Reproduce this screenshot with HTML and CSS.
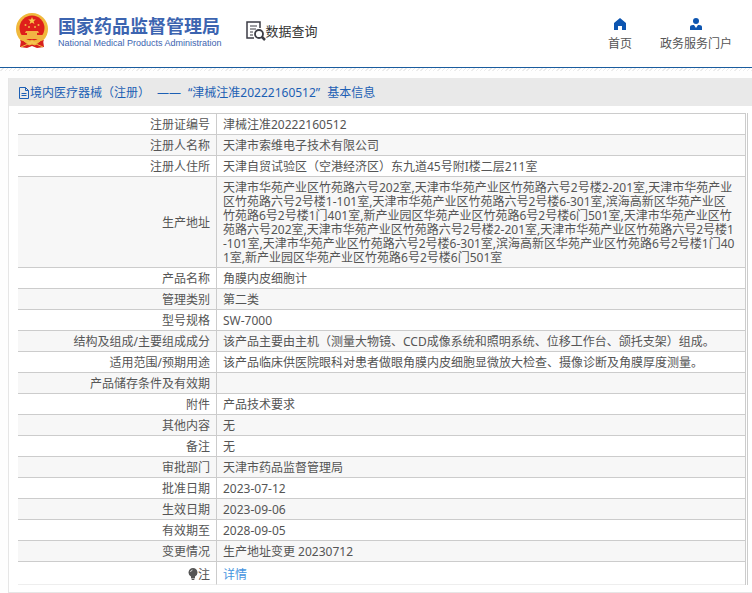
FILE: index.html
```html
<!DOCTYPE html>
<html lang="zh-CN">
<head>
    <meta charset="UTF-8">
    <meta name="viewport" content="width=device-width, initial-scale=1.0">
    <title>国家药品监督管理局 数据查询</title>
    <link rel="stylesheet" href="styles.css">
</head>
<body>
    <header class="header">
        <a class="brand" href="#">
            <svg class="emblem" viewBox="0 0 34 36">
                <path d="M6 27 L5 34 L12 35 L17 33 L22 35 L29 34 L28 27z" fill="#d8201c"/>
                <circle cx="17" cy="16" r="16" fill="#f0b93c"/>
                <circle cx="17" cy="15" r="12.500" fill="#de1f1b"/>
                <path d="M17 4l1 2.600h2.800l-2.200 1.700.8 2.700-2.400-1.600-2.400 1.600.8-2.700-2.200-1.700H16z" fill="#f8c94c"/>
                <g fill="#f2b544">
                    <circle cx="10.500" cy="12" r="1"/>
                    <circle cx="14" cy="14" r="1"/>
                    <circle cx="20" cy="14" r="1"/>
                    <circle cx="23.500" cy="12" r="1"/>
                    <path d="M11 18h12l1 2H10zM12 20h10v2H12zM6 22h22v4H6z"/>
                </g>
                <path d="M5 27q12 5 24 0l-2 4q-10 3-20 0z" fill="#d8201c"/>
                <path d="M9 28l5 1 3-2 3 2 5-1-5 4-3-1-3 1zM6 34l7-3M28 34l-7-3" fill="#f5c452" stroke="#f0b93c"/>
            </svg>
            <span class="brand-text">
                <span class="brand-cn">国家药品监督管理局</span>
                <span class="brand-en">National Medical Products Administration</span>
            </span>
        </a>
        <a class="search" href="#">
            <svg class="search-icon" viewBox="0 0 20 20" fill="none" stroke="#3d3d45">
                <path d="M8 17H1V1h13v6" stroke-width="1.500"/>
                <path d="M4 5h7M4 8h6M4 11h3M4 14h3"/>
                <circle cx="13" cy="13" r="4" stroke-width="1.800"/>
                <path d="M16 16l3 3" stroke-width="2.500"/>
            </svg>
            数据查询
        </a>
        <nav class="nav">
            <a href="#">
                <svg class="nav-icon" viewBox="0 0 12 12" fill="#0d55b0"><path d="M6 0l6 5v7H8V8H4v4H0V5z"/></svg>
                首页
            </a>
            <a href="#">
                <svg class="nav-icon" viewBox="0 0 12 12" fill="#0d55b0"><circle cx="6" cy="3" r="3"/><path d="M0 12V9q0-2 3-2h1l2 3 2-3h1q3 0 3 2v3z"/></svg>
                政务服务门户
            </a>
        </nav>
    </header>
    <div class="stripes"></div>

    <main class="panel">
        <h1 class="panel-title">
            <svg class="doc-icon" viewBox="0 0 12 12" fill="none" stroke="#1c5fb4"><path d="M1.500.5h6l3 3v8h-9zM7.500.5v3h3M3.500 6.500h5M3.500 8.500h5"/></svg>
            <span>境内医疗器械（注册）</span>
            <span>——</span>
            <span>“津械注准20222160512”</span>
            <span>基本信息</span>
        </h1>
        <div class="table-box">
            <table class="info">
                <tr><th scope="row">注册证编号</th><td>津械注准20222160512</td></tr>
                <tr><th scope="row">注册人名称</th><td>天津市索维电子技术有限公司</td></tr>
                <tr><th scope="row">注册人住所</th><td>天津自贸试验区（空港经济区）东九道45号附I楼二层211室</td></tr>
                <tr><th scope="row">生产地址</th><td>天津市华苑产业区竹苑路六号202室,天津市华苑产业区竹苑路六号2号楼2-201室,天津市华苑产业<br>区竹苑路六号2号楼1-101室,天津市华苑产业区竹苑路六号2号楼6-301室,滨海高新区华苑产业区<br>竹苑路6号2号楼1门401室,新产业园区华苑产业区竹苑路6号2号楼6门501室,天津市华苑产业区竹<br>苑路六号202室,天津市华苑产业区竹苑路六号2号楼2-201室,天津市华苑产业区竹苑路六号2号楼1<br>-101室,天津市华苑产业区竹苑路六号2号楼6-301室,滨海高新区华苑产业区竹苑路6号2号楼1门40<br>1室,新产业园区华苑产业区竹苑路6号2号楼6门501室</td></tr>
                <tr><th scope="row">产品名称</th><td>角膜内皮细胞计</td></tr>
                <tr><th scope="row">管理类别</th><td>第二类</td></tr>
                <tr><th scope="row">型号规格</th><td>SW-7000</td></tr>
                <tr><th scope="row">结构及组成/主要组成成分</th><td>该产品主要由主机（测量大物镜、CCD成像系统和照明系统、位移工作台、颌托支架）组成。</td></tr>
                <tr><th scope="row">适用范围/预期用途</th><td>该产品临床供医院眼科对患者做眼角膜内皮细胞显微放大检查、摄像诊断及角膜厚度测量。</td></tr>
                <tr><th scope="row">产品储存条件及有效期</th><td></td></tr>
                <tr><th scope="row">附件</th><td>产品技术要求</td></tr>
                <tr><th scope="row">其他内容</th><td>无</td></tr>
                <tr><th scope="row">备注</th><td>无</td></tr>
                <tr><th scope="row">审批部门</th><td>天津市药品监督管理局</td></tr>
                <tr><th scope="row">批准日期</th><td>2023-07-12</td></tr>
                <tr><th scope="row">生效日期</th><td>2023-09-06</td></tr>
                <tr><th scope="row">有效期至</th><td>2028-09-05</td></tr>
                <tr><th scope="row">变更情况</th><td>生产地址变更 20230712</td></tr>
                <tr class="note">
                    <th scope="row"><svg class="bulb" viewBox="0 0 10 12"><path d="M5 0a4.500 4.500 0 0 1 2 8.500V10H3V8.500A4.500 4.500 0 0 1 5 0zM3 10.500h4L6 12H4z" fill="#555"/><path d="M2.500 4q.5-2 2-2" fill="none" stroke="#ddd"/></svg>注</th>
                    <td><a href="#">详情</a></td>
                </tr>
            </table>
        </div>
    </main>
</body>
</html>
```

FILE: styles.css
```css
body {
    margin: 0;
    font-family: "Noto Sans", "Noto Sans CJK SC", sans-serif;
    font-size: 12px;
    line-height: 14px;
    color: #555;
    background-color: #fefefe;
}

a {
    color: inherit;
    text-decoration: none;
}

svg {
    display: block;
    flex: none;
}

.header {
    display: flex;
    align-items: center;
    box-sizing: border-box;
    height: 68px;
    padding: 0 20px 6px 15px;
    background-color: #fff;
    border-bottom: 1px solid #1a5c9e;
}

.brand {
    display: flex;
    align-items: center;
    gap: 9px;
    color: #3c64b0;
}

.emblem {
    width: 34px;
    height: 36px;
}

.brand-text {
    display: flex;
    flex-direction: column;
    padding-top: 3px;
    white-space: nowrap;
}

.brand-cn {
    font-size: 18px;
    line-height: 22px;
    font-weight: bold;
}

.brand-en {
    font-family: "Liberation Sans", Arial, sans-serif;
    font-size: 9px;
    line-height: 12px;
}

.search {
    display: flex;
    align-items: center;
    margin-left: 24px;
    font-size: 13px;
    color: #333;
}

.search-icon {
    width: 20px;
    height: 20px;
}

.nav {
    display: flex;
    gap: 28px;
    margin-left: auto;
    padding-top: 8px;
}

.nav a {
    display: flex;
    flex-direction: column;
    align-items: center;
    gap: 7px;
}

.nav-icon {
    width: 12px;
    height: 12px;
}

.stripes {
    height: 3px;
    background: repeating-linear-gradient(135deg, #fff 0, #fff 2px, #ececec 2px, #ececec 3px);
}

.panel {
    margin: 7px 0 0 8px;
    padding-bottom: 7px;
    background-color: #fff;
    border-left: 1px solid #e6e6e6;
    border-bottom: 1px solid #e6e6e6;
}

.panel-title {
    display: flex;
    align-items: center;
    gap: 7px;
    box-sizing: border-box;
    height: 28px;
    margin: 0 0 7px;
    padding: 2px 0 0 9px;
    font-size: 12px;
    font-weight: normal;
    color: #1c5fb4;
    background-color: #e9e9e9;
}

.doc-icon {
    width: 12px;
    height: 12px;
    margin-right: -7px;
}

.table-box {
    margin: 0 4px 0 9px;
    padding-right: 1px;
    border-right: 1px solid #ccc;
}

.info {
    width: 100%;
    border-collapse: separate;
    border-spacing: 0;
    border-top: 1px solid #ccc;
    border-right: 1px solid #ccc;
}

.info th,
.info td {
    padding: 4px 6px 2px;
    height: 14px;
    border-bottom: 1px solid #ccc;
}

.info th {
    width: 186px;
    font-weight: normal;
    text-align: right;
    border-right: 1px solid #ccc;
}

.info td {
    text-align: left;
}

.info tr:nth-child(even) {
    background-color: #f7f7f7;
}

.info .note th,
.info .note td {
    padding-top: 6px;
    border-bottom-color: #eee;
}

.note a {
    color: #4594e0;
}

.bulb {
    display: inline-block;
    width: 10px;
    height: 12px;
    vertical-align: -1px;
}
```
